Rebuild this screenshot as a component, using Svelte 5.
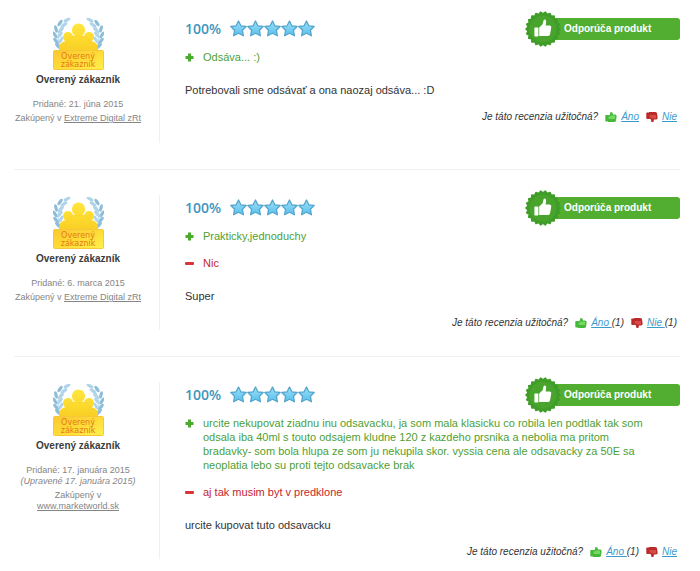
<script>
  const reviews = [
    {
      added: '21. júna 2015',
      shop: 'Extreme Digital zRt',
      rating: 100,
      pros: ['Odsáva... :)'],
      cons: [],
      text: 'Potrebovali sme odsávať a ona naozaj odsáva... :D',
      yes: 0,
      no: 0
    },
    {
      added: '6. marca 2015',
      shop: 'Extreme Digital zRt',
      rating: 100,
      pros: ['Prakticky,jednoduchy'],
      cons: ['Nic'],
      text: 'Super',
      yes: 1,
      no: 1
    },
    {
      added: '17. januára 2015',
      edited: '17. januára 2015',
      shop: 'www.marketworld.sk',
      rating: 100,
      pros: [
        'urcite nekupovat ziadnu inu odsavacku, ja som mala klasicku co robila len podtlak tak som odsala iba 40ml s touto odsajem kludne 120 z kazdeho prsnika a nebolia ma pritom bradavky- som bola hlupa ze som ju nekupila skor. vyssia cena ale odsavacky za 50E sa neoplatia lebo su proti tejto odsavacke brak'
      ],
      cons: ['aj tak musim byt v predklone'],
      text: 'urcite kupovat tuto odsavacku',
      yes: 1,
      no: 0
    }
  ];

  // x, y, rotation of each leaf on the left laurel branch
  const leaves = [
    [14, 3, -25],
    [7, 6, -55],
    [11, 8, -30],
    [3, 12, 75],
    [8, 13, -45],
    [2, 18, 60],
    [7, 18, -50],
    [3, 24, 50],
    [8, 23, -60],
    [5, 29, 45]
  ];

  const teeth = 22;
  const seal = Array.from({ length: teeth * 2 }, (_, i) => {
    const r = i % 2 ? 15 : 17;
    const a = (i * Math.PI) / teeth;
    return `${(18 + r * Math.cos(a)).toFixed(2)},${(18 + r * Math.sin(a)).toFixed(2)}`;
  }).join(' ');
</script>

{#snippet branch()}
  <path d="M14 4 Q1 14 7 31" fill="none" stroke="#c3dff0" stroke-width="1.4" />
  {#each leaves as [x, y, angle], i}
    <ellipse
      cx={x}
      cy={y}
      rx="3.8"
      ry="1.6"
      fill={i % 2 ? '#8dbdd8' : '#b0d4e8'}
      transform="rotate({angle} {x} {y})"
    />
  {/each}
{/snippet}

{#snippet verified()}
  <svg class="verified" viewBox="0 0 51 53" role="img" aria-label="Overený zákazník">
    <defs>
      <linearGradient id="gold" gradientUnits="userSpaceOnUse" x1="0" y1="6" x2="0" y2="35">
        <stop offset="0" stop-color="#ffe640" />
        <stop offset="0.6" stop-color="#fcd92c" />
        <stop offset="1" stop-color="#f9cd24" />
      </linearGradient>
      <linearGradient id="ribbon" x1="0" y1="0" x2="1" y2="1">
        <stop offset="0" stop-color="#fbc630" />
        <stop offset="0.5" stop-color="#ffdb36" />
        <stop offset="1" stop-color="#fff04c" />
      </linearGradient>
    </defs>
    {@render branch()}
    <g transform="translate(51 0) scale(-1 1)">{@render branch()}</g>
    <g fill="url(#gold)">
      <path d="M6 36 V30 Q7 25 13 24 H38 Q44 25 45 30 V36Z" />
      <circle cx="15" cy="20" r="5" />
      <circle cx="36" cy="20" r="5" />
      <path
        d="M12 35 Q12 21 21 19 H30 Q39 21 39 35Z"
        stroke="#fbcb2c"
        stroke-width="0.6"
      />
      <circle cx="25.5" cy="13" r="6.6" />
    </g>
    <rect x="0.5" y="33.5" width="50" height="19" rx="1" fill="url(#ribbon)" stroke="#f5c73c" />
    <text x="25" y="42">Overený</text>
    <text x="25" y="50">zákazník</text>
  </svg>
{/snippet}

{#snippet star()}
  <svg class="star" viewBox="0 0 17 17" aria-hidden="true">
    <defs>
      <linearGradient id="sky" x1="0" y1="0" x2="0" y2="1">
        <stop offset="0" stop-color="#a0def8" />
        <stop offset="1" stop-color="#55c0ec" />
      </linearGradient>
    </defs>
    <path
      d="M8.5 1 L10.9 5.8 L16.2 6.5 L12.4 10.2 L13.4 15.8 L8.5 13.2 L3.6 15.8 L4.6 10.2 L0.8 6.5 L6.1 5.8Z"
      fill="url(#sky)"
      stroke="#56a5cd"
      stroke-width="1.3"
      stroke-linejoin="round"
    />
  </svg>
{/snippet}

{#snippet hand(down)}
  <svg class="hand" class:down viewBox="0 0 12 12" aria-hidden="true">
    <path d="M3 4.6 L5 3.4 L5.4 1 Q8 0.4 8 3.6 H10.4 Q11.8 4 11.6 5.4 L11 9.8 Q10.6 11 9 11 H3Z" />
    <rect x="0.3" y="4" width="3.2" height="6.6" rx="0.8" />
    <path class="shine" d="M3.6 6 L6.2 4.6 H10 V8 H3.6Z" />
  </svg>
{/snippet}

<section class="reviews">
  {#each reviews as review}
    <article class="review">
      <aside class="author">
        {@render verified()}
        <strong class="name">Overený zákazník</strong>
        <p>
          Pridané: {review.added}
          {#if review.edited}
            <br /><em>(Upravené {review.edited})</em>
          {/if}
        </p>
        <p>Zakúpený v <a href="#shop">{review.shop}</a></p>
      </aside>

      <div class="body">
        <header>
          <div class="rating">
            <span class="percent">{review.rating}%</span>
            <span class="stars">
              {#each { length: 5 } as _}{@render star()}{/each}
            </span>
          </div>
          <div class="recommend">
            <svg viewBox="0 0 36 36" aria-hidden="true">
              <polygon
                points={seal}
                fill="#3f9d28"
                stroke="#3f9d28"
                stroke-width="1.6"
                stroke-linejoin="round"
              />
              <circle cx="18" cy="18" r="13.5" fill="#48a42d" />
              <path
                d="M14.2 16.4 L17.6 13.2 L18.6 9.2 Q19.2 8 20.4 8.8 Q21.8 10 20.6 14.4 H24.8 Q26.8 14.8 26.2 17 L25 23.4 Q24.6 25 22.6 25 H14.2Z"
                fill="#fff"
              />
              <rect x="9.4" y="16.4" width="4" height="9" rx="0.6" fill="#fff" />
            </svg>
            Odporúča produkt
          </div>
        </header>

        <ul>
          {#each review.pros as pro}
            <li class="pro">
              <svg viewBox="0 0 9 9" aria-hidden="true">
                <path d="M3 0.5H6V3H8.5V6H6V8.5H3V6H0.5V3H3Z" />
              </svg>
              <span>{pro}</span>
            </li>
          {/each}
          {#each review.cons as con}
            <li class="con">
              <svg viewBox="0 0 9 9" aria-hidden="true">
                <rect x="0" y="3" width="9" height="3" rx="1" />
              </svg>
              <span>{con}</span>
            </li>
          {/each}
        </ul>

        <p class="text">{review.text}</p>

        <footer>
          <span>Je táto recenzia užitočná?</span>
          <span class="vote">
            {@render hand(false)}
            <span><a href="#yes">{review.yes ? 'Áno ' : 'Áno'}</a>{review.yes ? `(${review.yes})` : ''}</span>
          </span>
          <span class="vote">
            {@render hand(true)}
            <span><a href="#no">{review.no ? 'Nie ' : 'Nie'}</a>{review.no ? `(${review.no})` : ''}</span>
          </span>
        </footer>
      </div>
    </article>
  {/each}
</section>

<style>
  :global(body) {
    background: #fff;
  }

  .reviews {
    padding: 16px 20px 12px 14px;
    font-family: 'Liberation Sans', Arial, sans-serif;
    font-size: 11px;
    line-height: 14px;
    color: #333;
  }

  .review {
    display: flex;
    gap: 25px;
    padding: 25px 0 26px;
    border-bottom: 1px solid #f0f0f0;
  }

  .review:first-child {
    padding-top: 0;
  }

  .review:last-child {
    padding-bottom: 0;
    border-bottom: 0;
  }

  p,
  ul {
    margin: 0;
    padding: 0;
  }

  .author {
    display: flex;
    flex-direction: column;
    align-items: center;
    flex: none;
    width: 128px;
    padding: 1px 17px 19px 0;
    border-right: 1px solid #f0f0f0;
    font-size: 9px;
    line-height: 11px;
    text-align: center;
    color: #858585;
  }

  .author p + p {
    margin-top: 3px;
  }

  .author a {
    color: inherit;
    white-space: nowrap;
  }

  .verified {
    width: 51px;
    height: 53px;
  }

  .verified text {
    font-family: 'DejaVu Sans', sans-serif;
    font-size: 8px;
    text-anchor: middle;
    fill: #e27a18;
  }

  .name {
    margin: 3px 0 12px;
    font-size: 10px;
    line-height: 14px;
    color: #3c3c3c;
  }

  .body {
    flex: 1;
    min-width: 0;
  }

  header {
    display: flex;
    justify-content: space-between;
    align-items: center;
    height: 25px;
    margin-bottom: 9px;
  }

  .rating {
    display: flex;
    align-items: center;
    gap: 9px;
  }

  .percent {
    font-family: 'Open Sans', sans-serif;
    font-size: 14px;
    font-weight: 600;
    color: #3c96c0;
  }

  .stars {
    display: flex;
  }

  .star {
    width: 17px;
    height: 17px;
  }

  .recommend {
    position: relative;
    box-sizing: border-box;
    width: 136px;
    padding-left: 20px;
    border-radius: 3px;
    background: #52ae30;
    font-size: 10px;
    font-weight: bold;
    line-height: 22px;
    color: #fff;
  }

  .recommend svg {
    position: absolute;
    top: -7px;
    left: -19px;
    width: 36px;
    height: 36px;
  }

  ul {
    display: flex;
    flex-direction: column;
    gap: 13px;
    padding-right: 25px;
    list-style: none;
  }

  li {
    display: flex;
    gap: 9px;
  }

  li svg {
    flex: none;
    width: 9px;
    height: 9px;
    margin-top: 3px;
  }

  .pro {
    color: #4f9f35;
  }

  .pro svg {
    fill: #4bab2c;
  }

  .con {
    color: #c4262e;
  }

  .con svg {
    fill: #d8353b;
  }

  .text {
    margin-top: 19px;
  }

  footer {
    display: flex;
    justify-content: flex-end;
    gap: 7px;
    margin-top: 13px;
    padding-right: 3px;
    font-size: 10px;
    font-style: italic;
  }

  footer a {
    color: #3c9acb;
  }

  .vote {
    display: flex;
    align-items: center;
    gap: 4px;
  }

  .hand {
    width: 12px;
    height: 12px;
    fill: #45b83a;
  }

  .hand .shine {
    fill: #72da62;
  }

  .hand.down {
    transform: rotate(180deg) scaleX(-1);
    fill: #b92a2a;
  }

  .hand.down .shine {
    fill: #d84a46;
  }
</style>
